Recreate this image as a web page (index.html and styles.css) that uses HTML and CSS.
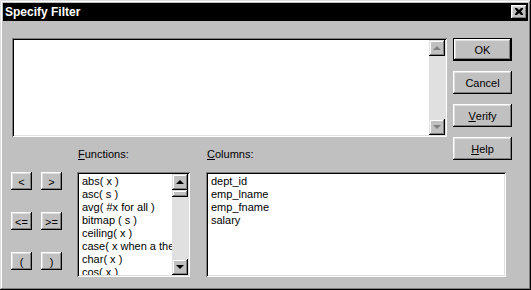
FILE: index.html
```html
<!DOCTYPE html>
<html>
<head>
<meta charset="utf-8">
<title>Specify Filter</title>
<link rel="stylesheet" href="styles.css">
</head>
<body>
<div class="window">
  <div class="titlebar">
    <span class="title">Specify Filter</span>
    <div class="close">
      <svg width="8" height="7" viewBox="0 0 8 7"><path d="M0 0h2l2 2 2-2h2v1l-2 2.5 2 2.5v1h-2l-2-2-2 2h-2v-1l2-2.5-2-2.5z" fill="#000"/></svg>
    </div>
  </div>
  <div class="body">
    <div class="editor">
      <div class="edit-area"></div>
      <div class="vscroll">
        <div class="sb-btn"><span class="tri up off"></span></div>
        <div class="track"></div>
        <div class="sb-btn"><span class="tri down off"></span></div>
      </div>
    </div>
    <div class="actions">
      <div class="btn default">OK</div>
      <div class="btn">Cancel</div>
      <div class="btn"><u>V</u>erify</div>
      <div class="btn"><u>H</u>elp</div>
    </div>
    <div class="builder">
      <div class="ops">
        <div class="btn op">&lt;</div>
        <div class="btn op">&gt;</div>
        <div class="btn op">&lt;=</div>
        <div class="btn op">&gt;=</div>
        <div class="btn op">(</div>
        <div class="btn op">)</div>
      </div>
      <div class="field functions">
        <div class="label"><u>F</u>unctions:</div>
        <div class="listbox">
          <ul class="items">
            <li>abs( x )</li>
            <li>asc( s )</li>
            <li>avg( #x for all )</li>
            <li>bitmap ( s )</li>
            <li>ceiling( x )</li>
            <li>case( x when a then b else c end )</li>
            <li>char( x )</li>
            <li>cos( x )</li>
          </ul>
          <div class="vscroll">
            <div class="sb-btn"><span class="tri up"></span></div>
            <div class="track"><div class="thumb"></div></div>
            <div class="sb-btn"><span class="tri down"></span></div>
          </div>
        </div>
      </div>
      <div class="field columns">
        <div class="label"><u>C</u>olumns:</div>
        <div class="listbox">
          <ul class="items">
            <li>dept_id</li>
            <li>emp_lname</li>
            <li>emp_fname</li>
            <li>salary</li>
          </ul>
        </div>
      </div>
    </div>
  </div>
</div>
</body>
</html>
```

FILE: styles.css
```css
* { box-sizing: border-box; }
html, body { margin: 0; padding: 0; background: #c0c0c0; }
body {
  font-family: "Liberation Sans", Arial, sans-serif;
  font-size: 11px;
  color: #000;
}
.window {
  width: 531px;
  height: 290px;
  padding: 3px;
  background: #c0c0c0;
  box-shadow: inset -1px -1px #000, inset 1px 1px #dfdfdf, inset -2px -2px #808080, inset 2px 2px #fff;
}
.titlebar {
  height: 18px;
  background: #000;
  display: flex;
  align-items: center;
  justify-content: space-between;
  padding: 0 1px 0 2px;
}
.title {
  color: #fff;
  font-weight: bold;
  font-size: 12px;
  line-height: 18px;
}
.close {
  width: 16px;
  height: 14px;
  background: #c0c0c0;
  box-shadow: inset -1px -1px #000, inset 1px 1px #fff, inset -2px -2px #808080, inset 2px 2px #dfdfdf;
  display: flex;
  align-items: center;
  justify-content: center;
  padding-bottom: 1px;
}
.body {
  display: grid;
  grid-template-columns: 435px 59px;
  grid-template-rows: 99px auto;
  column-gap: 6px;
  padding: 17px 0 0 9px;
}
.editor {
  grid-column: 1;
  grid-row: 1;
  display: flex;
  padding: 2px;
  background: #fff;
  box-shadow: inset 1px 1px #808080, inset -1px -1px #fff, inset 2px 2px #000, inset -2px -2px #dfdfdf;
}
.edit-area { flex: 1; }
.vscroll {
  width: 16px;
  display: flex;
  flex-direction: column;
}
.track {
  flex: 1;
  background: #e0e0e0;
}
.sb-btn {
  width: 16px;
  height: 16px;
  background: #c0c0c0;
  box-shadow: inset -1px -1px #000, inset 1px 1px #dfdfdf, inset -2px -2px #808080, inset 2px 2px #fff;
  display: flex;
  align-items: center;
  justify-content: center;
}
.tri {
  width: 0;
  height: 0;
  border-left: 4px solid transparent;
  border-right: 4px solid transparent;
}
.tri.up { border-bottom: 4px solid #000; margin-bottom: 1px; }
.tri.down { border-top: 4px solid #000; }
.tri.up.off { border-bottom-color: #808080; }
.tri.down.off { border-top-color: #808080; }
.thumb {
  height: 7px;
  background: #c0c0c0;
  box-shadow: inset -1px -1px #000, inset 1px 1px #dfdfdf, inset -2px -2px #808080, inset 2px 2px #fff;
}
.actions {
  grid-column: 2;
  grid-row: 1 / 3;
  display: flex;
  flex-direction: column;
  gap: 10px;
  align-self: start;
}
.btn {
  height: 23px;
  display: flex;
  align-items: center;
  justify-content: center;
  background: #c0c0c0;
  box-shadow: inset -1px -1px #000, inset 1px 1px #fff, inset -2px -2px #808080, inset 2px 2px #dfdfdf;
  padding-top: 1px;
}
.btn.default {
  box-shadow: inset 0 0 0 1px #000, inset -2px -2px #000, inset 2px 2px #fff, inset -3px -3px #808080, inset 3px 3px #dfdfdf;
}
.builder {
  grid-column: 1 / 3;
  grid-row: 2;
  margin-top: 11px;
  display: flex;
  align-items: flex-start;
}
.ops {
  display: grid;
  grid-template-columns: 21px 21px;
  grid-auto-rows: 18px;
  column-gap: 9px;
  row-gap: 22px;
  margin: 24px 15px 0 -1px;
}
.btn.op { height: 18px; }
.field { display: flex; flex-direction: column; }
.functions { width: 113px; margin-right: 16px; }
.columns { width: 300px; }
.label {
  height: 13px;
  line-height: 13px;
  margin: 0 0 11px 1px;
}
.listbox {
  height: 105px;
  padding: 2px;
  background: #fff;
  display: flex;
  box-shadow: inset 1px 1px #808080, inset -1px -1px #fff, inset 2px 2px #000, inset -2px -2px #dfdfdf;
}
.items {
  list-style: none;
  margin: 0;
  padding: 1px 0 0 3px;
  flex: 1;
  overflow: hidden;
  white-space: nowrap;
}
.items li { height: 13px; line-height: 13px; }
```
